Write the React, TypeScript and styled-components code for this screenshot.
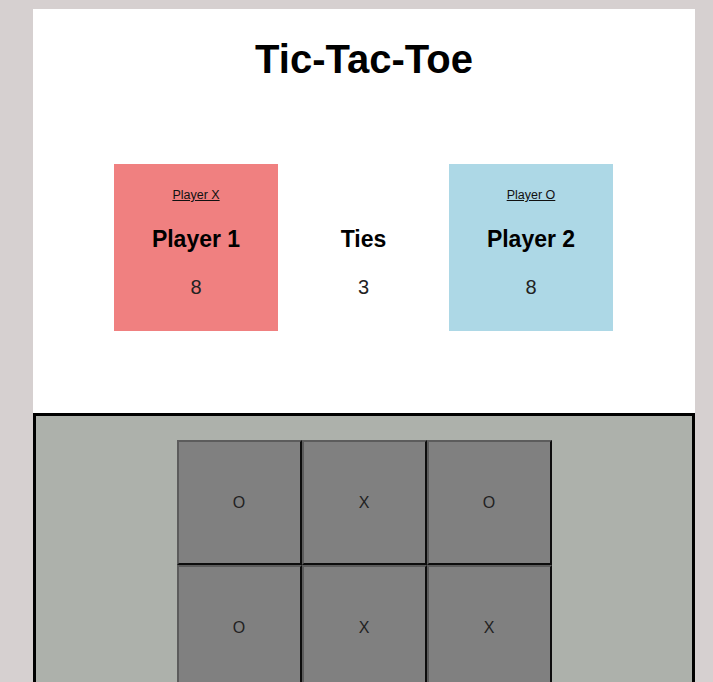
import React from "react";
import styled, { createGlobalStyle } from "styled-components";

const GlobalStyle = createGlobalStyle`
  html, body {
    margin: 0;
    padding: 0;
    background: #d6d0d0;
    font-family: "Liberation Sans", Arial, sans-serif;
    color: #000;
  }
`;

const Page = styled.div`
  margin: 9px 18px 0 33px;
  background: #ffffff;
  width: 662px;
`;

const Title = styled.h1`
  margin: 0;
  padding-top: 27px;
  text-align: center;
  font-size: 40px;
  line-height: 46px;
  font-weight: 700;
`;

const ScoreRow = styled.section`
  display: flex;
  padding: 82px 0 82px 81px;
`;

const ScoreCard = styled.div<{ $bg?: string; $wide?: boolean; $top?: number }>`
  width: ${(p) => (p.$wide ? 171 : 164)}px;
  height: 167px;
  box-sizing: border-box;
  padding-top: ${(p) => p.$top ?? 24}px;
  background: ${(p) => p.$bg ?? "transparent"};
  display: flex;
  flex-direction: column;
  align-items: center;
`;

const Mark = styled.span`
  font-size: 12.5px;
  line-height: 14px;
  text-decoration: underline;
  color: #111;
`;

const Name = styled.h2`
  margin: 24px 0 0;
  font-size: 23px;
  line-height: 26px;
  font-weight: 700;
`;

const Score = styled.div`
  margin-top: 23px;
  font-size: 20px;
  line-height: 24px;
  color: #222;
`;

const Board = styled.section`
  border: 3px solid #000;
  background: #adb1ab;
  padding: 24px 0;
  display: flex;
  justify-content: center;
`;

const Grid = styled.div`
  display: grid;
  grid-template-columns: repeat(3, 125px);
  grid-auto-rows: 125px;
`;

const Cell = styled.button`
  box-sizing: border-box;
  width: 125px;
  height: 125px;
  margin: 0;
  padding: 0;
  background: #808080;
  border: 2px solid;
  border-color: #5c5c5c #0d0d0d #0d0d0d #5c5c5c;
  font-family: "Liberation Sans", Arial, sans-serif;
  font-size: 16px;
  color: #222;
  cursor: pointer;
`;

const cells = ["O", "X", "O", "O", "X", "X", "", "", ""];

export default function App() {
  return (
    <>
      <GlobalStyle />
      <Page>
        <Title>Tic-Tac-Toe</Title>
        <ScoreRow>
          <ScoreCard $bg="#f08080">
            <Mark>Player X</Mark>
            <Name>Player 1</Name>
            <Score>8</Score>
          </ScoreCard>
          <ScoreCard $wide $top={38}>
            <Name>Ties</Name>
            <Score>3</Score>
          </ScoreCard>
          <ScoreCard $bg="#add8e6">
            <Mark>Player O</Mark>
            <Name>Player 2</Name>
            <Score>8</Score>
          </ScoreCard>
        </ScoreRow>
        <Board>
          <Grid>
            {cells.map((c, i) => (
              <Cell key={i}>{c}</Cell>
            ))}
          </Grid>
        </Board>
      </Page>
    </>
  );
}
